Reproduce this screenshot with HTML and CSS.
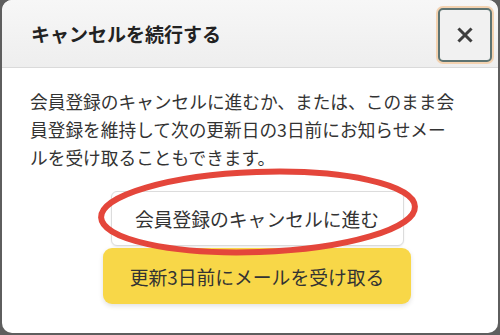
FILE: index.html
```html
<!DOCTYPE html>
<html lang="ja">
<head>
<meta charset="utf-8">
<link rel="stylesheet" href="styles.css">
</head>
<body>
<div class="modal">
  <div class="modal-header">
    <h1 class="title">キャンセルを続行する</h1>
    <button class="close" aria-label="閉じる">
      <svg width="16" height="16" viewBox="0 0 16 16"><path d="M2.5 2.5 L13.5 13.5 M13.5 2.5 L2.5 13.5" stroke="#3f3f3f" stroke-width="3" stroke-linecap="square" fill="none"/></svg>
    </button>
  </div>
  <div class="modal-body">
    <p class="message">会員登録のキャンセルに進むか、または、このまま会員登録を維持して次の更新日の3日前にお知らせメールを受け取ることもできます。</p>
    <div class="actions">
      <button class="btn btn-cancel">会員登録のキャンセルに進む</button>
      <button class="btn btn-remind">更新3日前にメールを受け取る</button>
    </div>
  </div>
  <svg class="annotation" width="496" height="333" viewBox="0 0 496 333">
    <ellipse cx="256" cy="212" rx="157" ry="40" transform="rotate(-2 256 212)" fill="none" stroke="#e4463b" stroke-width="6"/>
  </svg>
</div>
</body>
</html>
```

FILE: styles.css
```css
html, body {
  margin: 0;
  padding: 0;
}
body {
  width: 500px;
  height: 335px;
  background: #5e5e5e;
  overflow: hidden;
  font-family: "Noto Sans CJK JP", "Noto Sans", sans-serif;
}
.modal {
  position: relative;
  margin-left: 2px;
  width: 496px;
  height: 333px;
  background: #ffffff;
  border-radius: 10px;
  overflow: hidden;
}
.modal-header {
  height: 67px;
  border-bottom: 1px solid #dadada;
  background: linear-gradient(#f7f7f7, #eeeeee);
  display: flex;
  align-items: center;
  justify-content: space-between;
  padding: 0 6px 0 29px;
}
.title {
  margin: 0;
  font-size: 19px;
  font-weight: 700;
  color: #222222;
  line-height: 1;
}
.close {
  width: 54px;
  height: 54px;
  margin-top: 2px;
  border: 2px solid #5d7371;
  border-radius: 5px;
  background: #f1f1f1;
  box-shadow: 0 0 0 2px #f3d2b0;
  display: flex;
  align-items: center;
  justify-content: center;
  padding: 0;
}
.close svg {
  display: block;
}
.modal-body {
  padding: 19px 14px 0 28px;
}
.message {
  margin: 0;
  width: 430px;
  font-size: 17.7px;
  line-height: 28px;
  color: #333333;
}
.actions {
  margin-top: 20px;
  display: flex;
  flex-direction: column;
  align-items: center;
  gap: 2px;
}
.btn {
  font-family: inherit;
  font-size: 18.8px;
  color: #333333;
  display: flex;
  align-items: center;
  justify-content: center;
  padding: 0;
}
.btn-cancel {
  width: 293px;
  height: 55px;
  background: #ffffff;
  border: 1px solid #dcdcdc;
  border-radius: 6px;
  box-shadow: 0 1px 2px rgba(0, 0, 0, 0.08);
}
.btn-remind {
  width: 308px;
  height: 56px;
  background: #f8d748;
  border: none;
  border-radius: 9px;
  box-shadow: 0 2px 5px rgba(0, 0, 0, 0.12);
}
.annotation {
  position: absolute;
  left: 0;
  top: 0;
  pointer-events: none;
}
```
